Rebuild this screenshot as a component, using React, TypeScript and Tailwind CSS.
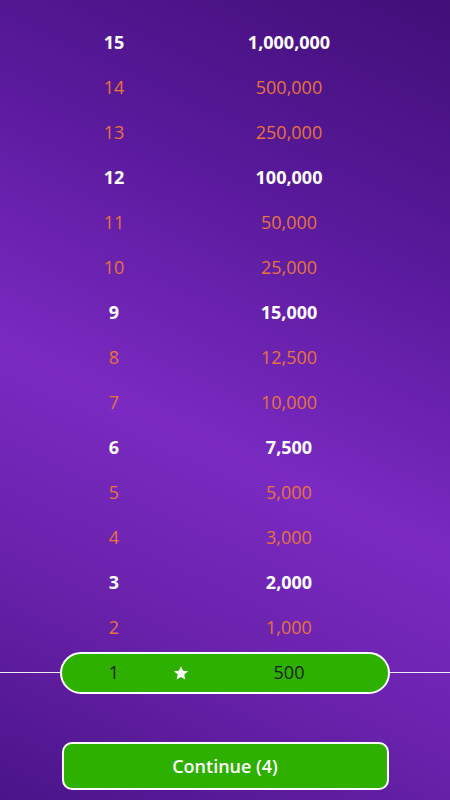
const levels = [
  { n: 15, amount: "1,000,000", safe: true },
  { n: 14, amount: "500,000", safe: false },
  { n: 13, amount: "250,000", safe: false },
  { n: 12, amount: "100,000", safe: true },
  { n: 11, amount: "50,000", safe: false },
  { n: 10, amount: "25,000", safe: false },
  { n: 9, amount: "15,000", safe: true },
  { n: 8, amount: "12,500", safe: false },
  { n: 7, amount: "10,000", safe: false },
  { n: 6, amount: "7,500", safe: true },
  { n: 5, amount: "5,000", safe: false },
  { n: 4, amount: "3,000", safe: false },
  { n: 3, amount: "2,000", safe: true },
  { n: 2, amount: "1,000", safe: false },
];

function Cells({ n, amount, star, className }: { n: number; amount: string; star?: boolean; className: string }) {
  return (
    <div className={`flex w-[328px] items-center ${className}`}>
      <span className="w-[108px] text-center">{n}</span>
      <span className="flex w-[26px] justify-center">
        {star ? (
          <svg width="16" height="16" viewBox="0 0 24 24" fill="white">
            <path d="M12 1.8l3.05 6.9 7.5.7-5.67 5 1.67 7.35L12 17.9l-6.55 3.85 1.67-7.35-5.67-5 7.5-.7z" />
          </svg>
        ) : null}
      </span>
      <span className="w-[190px] text-center">{amount}</span>
    </div>
  );
}

export default function App() {
  return (
    <div
      className="flex h-[800px] w-[450px] flex-col overflow-hidden bg-[linear-gradient(205deg,#410f78_0%,#5a1a9c_28%,#7a2ac1_55%,#6a22ac_75%,#4a1489_100%)] text-[18px]"
      style={{ fontFamily: '"Open Sans", "Noto Sans", sans-serif' }}
    >
      <div className="pt-[20px]">
        {levels.map((l) => (
          <div key={l.n} className="flex h-[45px] items-center pl-[60px]">
            <Cells
              n={l.n}
              amount={l.amount}
              className={l.safe ? "font-bold text-white" : "text-[#e8733d]"}
            />
          </div>
        ))}
        <div className="flex h-[45px] items-center">
          <div className="h-px flex-1 bg-white/90" />
          <div className="flex h-[42px] items-center rounded-full border-2 border-white bg-[#2db000]">
            <Cells n={1} amount="500" star className="-ml-[2px] text-[#1c1c1c]" />
          </div>
          <div className="h-px flex-1 bg-white/90" />
        </div>
      </div>
      <div className="mt-[47px] flex justify-center">
        <button className="h-[48px] w-[327px] rounded-[10px] border-2 border-white bg-[#2db000] text-[18px] font-semibold text-white">
          Continue (4)
        </button>
      </div>
    </div>
  );
}
